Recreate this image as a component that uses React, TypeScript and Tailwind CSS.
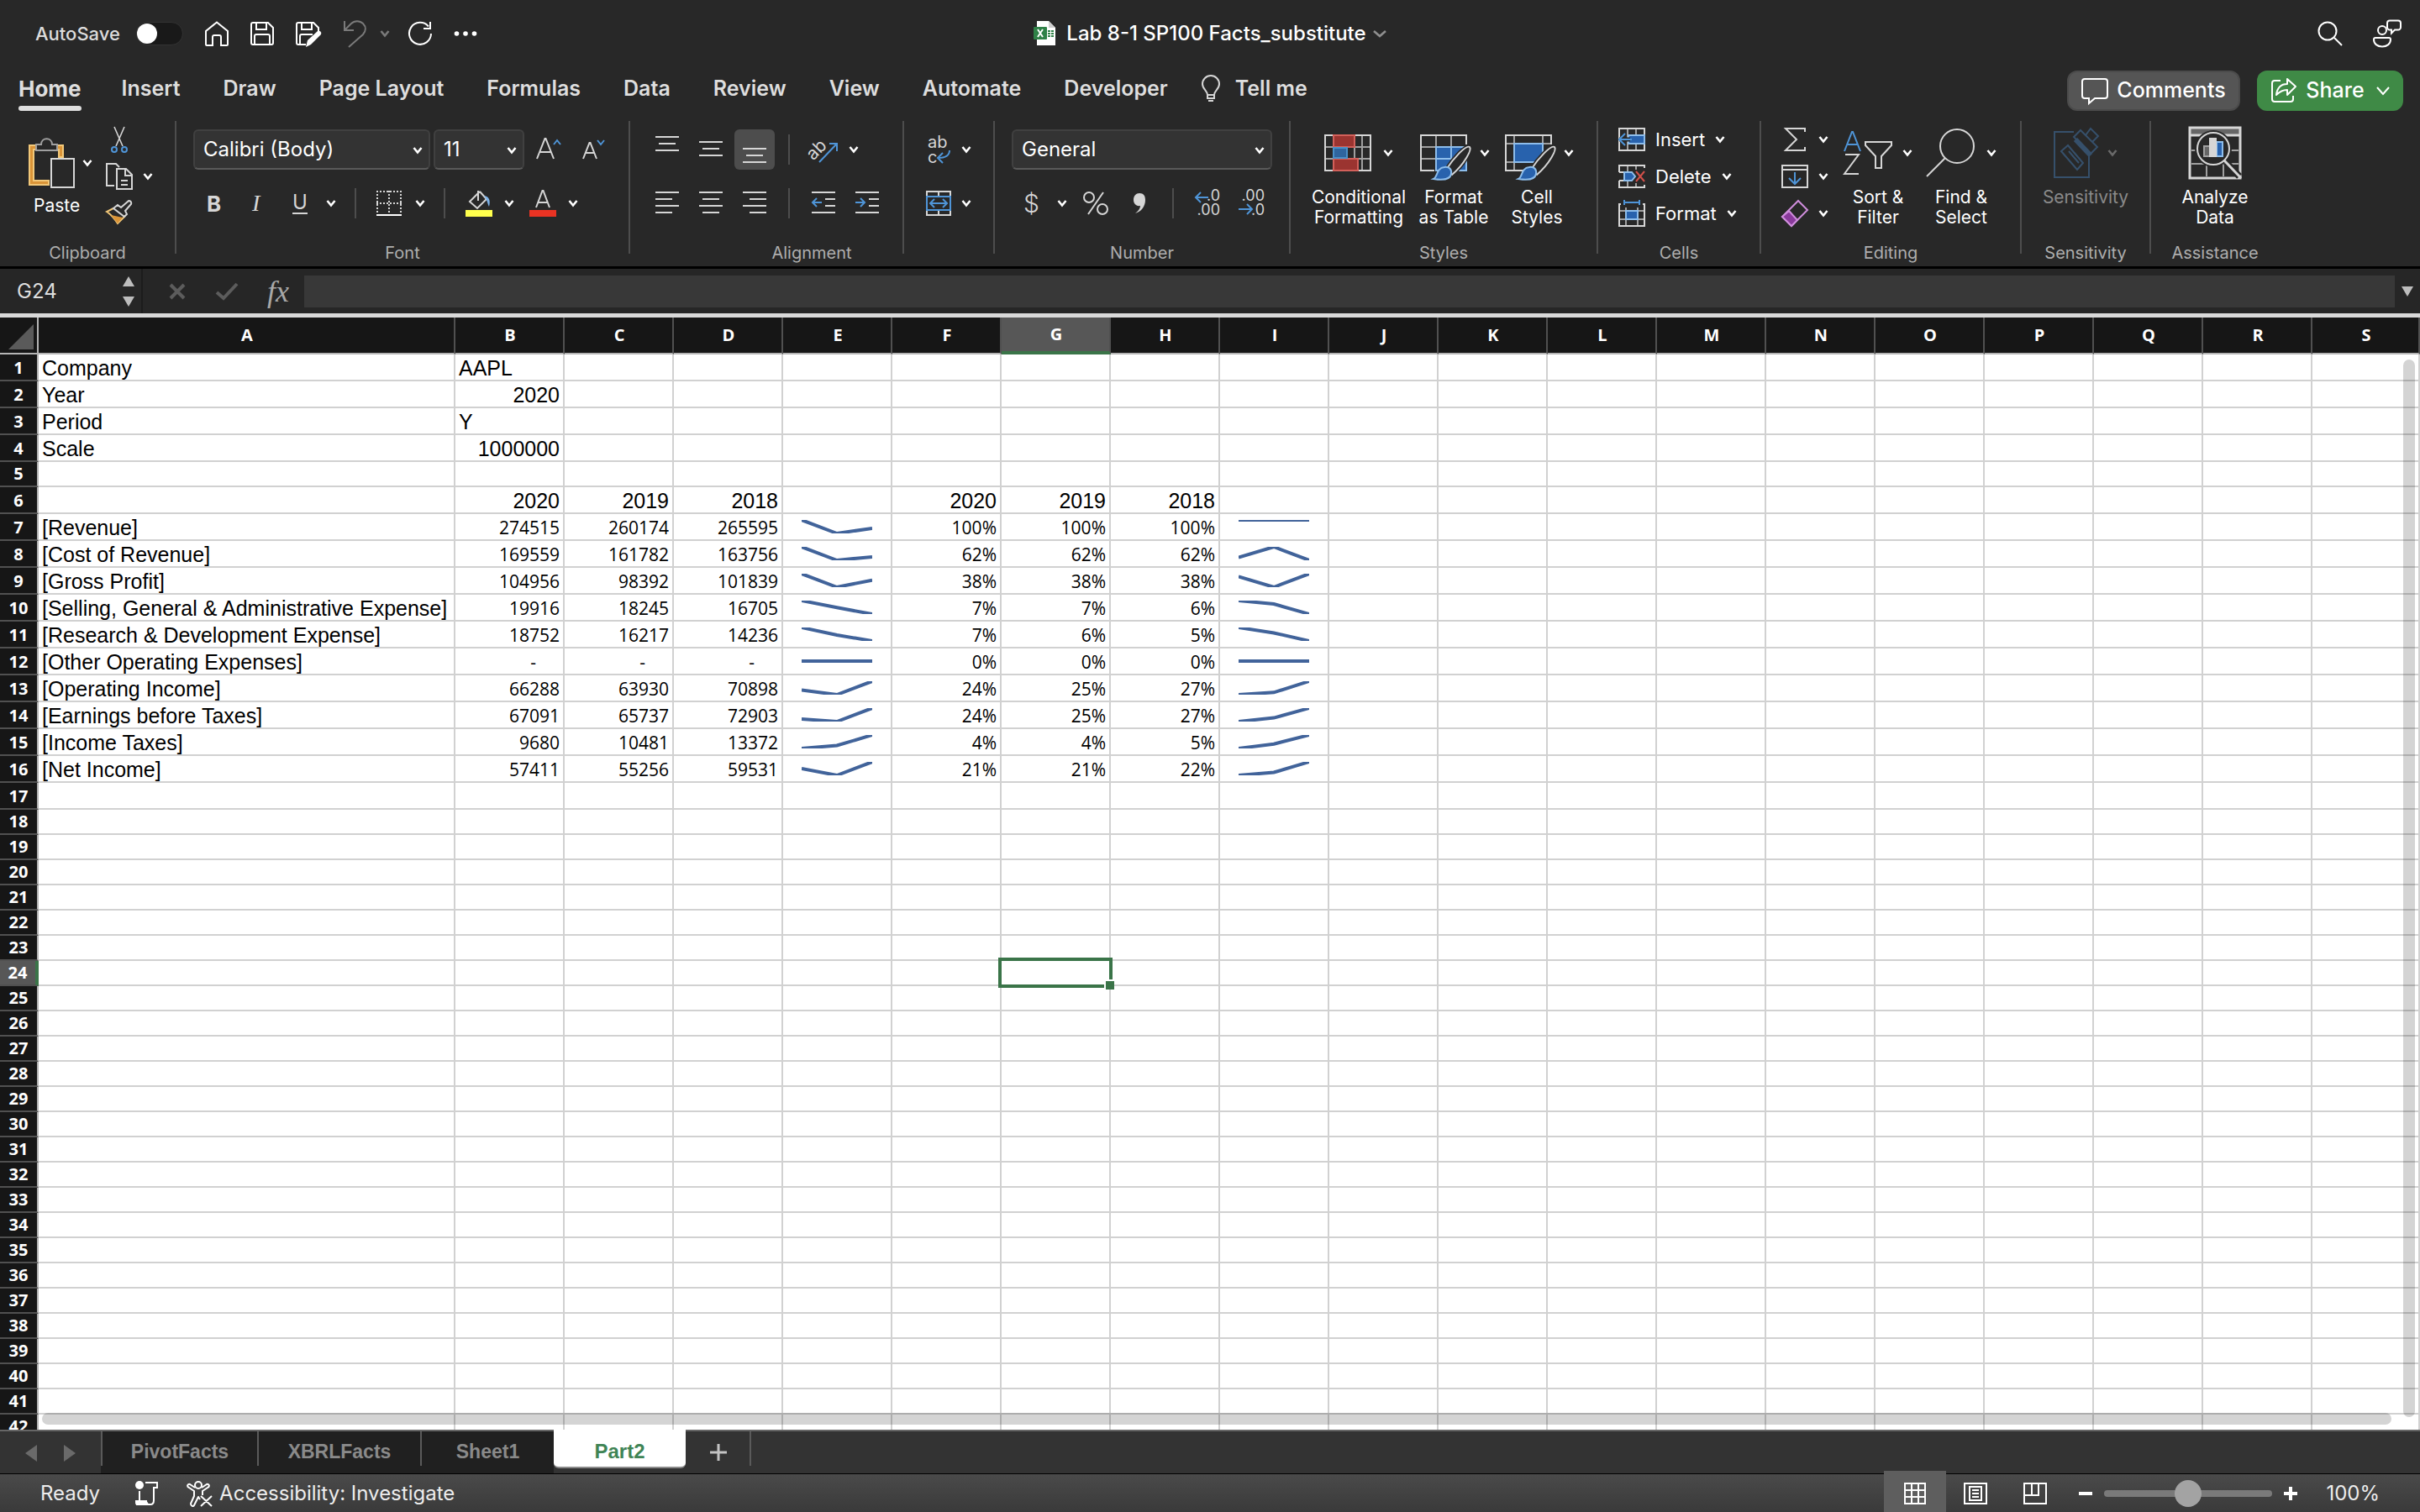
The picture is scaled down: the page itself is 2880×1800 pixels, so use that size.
import { ReactNode } from "react";

type Row = { label: string; values: [number, number, number] };

const COLUMNS = "ABCDEFGHIJKLMNOPQRS".split("");
const REVENUE = [274515, 260174, 265595];

const HEADINGS = ["2020", "2019", "2018"];

const STATEMENT: Row[] = [
  { label: "[Revenue]", values: [274515, 260174, 265595] },
  { label: "[Cost of Revenue]", values: [169559, 161782, 163756] },
  { label: "[Gross Profit]", values: [104956, 98392, 101839] },
  { label: "[Selling, General & Administrative Expense]", values: [19916, 18245, 16705] },
  { label: "[Research & Development Expense]", values: [18752, 16217, 14236] },
  { label: "[Other Operating Expenses]", values: [0, 0, 0] },
  { label: "[Operating Income]", values: [66288, 63930, 70898] },
  { label: "[Earnings before Taxes]", values: [67091, 65737, 72903] },
  { label: "[Income Taxes]", values: [9680, 10481, 13372] },
  { label: "[Net Income]", values: [57411, 55256, 59531] },
];

const TABS = [
  "Insert",
  "Draw",
  "Page Layout",
  "Formulas",
  "Data",
  "Review",
  "View",
  "Automate",
  "Developer",
];

/* ---------- small pieces ---------- */

function Chevron({ className = "text-white" }: { className?: string }) {
  return (
    <svg className={`h-3 w-3 shrink-0 ${className}`} viewBox="0 0 12 12" fill="none" stroke="currentColor" strokeWidth="2.6">
      <path d="M1.5 3 6 8.5 10.5 3" />
    </svg>
  );
}

function Icon({ w, h, children, className = "" }: { w: number; h: number; children: ReactNode; className?: string }) {
  return (
    <svg
      width={w}
      height={h}
      viewBox={`0 0 ${w} ${h}`}
      fill="none"
      stroke="#d6d6d6"
      strokeWidth="2"
      className={`block shrink-0 overflow-visible ${className}`}
    >
      {children}
    </svg>
  );
}

function Tool({ label, children, className = "" }: { label: string; children: ReactNode; className?: string }) {
  return (
    <button type="button" aria-label={label} className={`flex shrink-0 items-center ${className}`}>
      {children}
    </button>
  );
}

function GroupLabel({ children }: { children: ReactNode }) {
  return <div className="-mb-[6px] h-[14px] text-center text-[20px] leading-[14px] text-[#aeaeae]">{children}</div>;
}

function Group({ label, className, children }: { label: string; className: string; children: ReactNode }) {
  return (
    <section className={`flex h-[158px] shrink-0 flex-col justify-between border-r-2 border-[#4d4d4d] ${className}`}>
      <div>{children}</div>
      <GroupLabel>{label}</GroupLabel>
    </section>
  );
}

function Rule({ className = "" }: { className?: string }) {
  return <span className={`h-9 w-[2px] shrink-0 bg-[#4d4d4d] ${className}`} />;
}

function BigTool({ icon, lines, className = "", muted = false }: { icon: ReactNode; lines: string[]; className?: string; muted?: boolean }) {
  return (
    <button type="button" className={`flex shrink-0 flex-col items-center text-[21px] leading-6 ${muted ? "text-[#8a8a8a]" : "text-white"} ${className}`}>
      <span className="mb-[3px] flex h-[76px] items-center">{icon}</span>
      {lines.map((l) => (
        <span key={l}>{l}</span>
      ))}
    </button>
  );
}

function Lines({ rows }: { rows: [number, number, number][] }) {
  return (
    <Icon w={28} h={28}>
      {rows.map(([y, a, b]) => (
        <path key={y} d={`M${a} ${y}H${b}`} />
      ))}
    </Icon>
  );
}

function Combo({ label, value, className }: { label: string; value: string; className: string }) {
  return (
    <div className={`relative h-12 shrink-0 ${className}`}>
      <select
        aria-label={label}
        className="h-full w-full appearance-none rounded-md border-2 border-[#404040] border-b-[#5a5a5a] bg-[#333333] pl-[10px] text-[24px] text-white"
      >
        <option>{value}</option>
      </select>
      <span className="pointer-events-none absolute top-[19px] right-[9px]">
        <Chevron />
      </span>
    </div>
  );
}

/* ---------- title bar ---------- */

function TitleBar() {
  return (
    <header className="grid h-20 grid-cols-[1fr_auto_1fr] items-center text-white">
      <div className="flex items-center pl-[42px]">
        <label htmlFor="autosave" className="w-[120px] text-[22px] font-medium text-[#dcdcdc]">
          AutoSave
        </label>
        <span className="relative h-7 w-14">
          <input id="autosave" type="checkbox" className="h-7 w-14 appearance-none rounded-full border border-[#333333] bg-[#191919]" />
          <span className="pointer-events-none absolute top-[2px] left-[1px] h-6 w-6 rounded-full bg-white" />
        </span>
        <div className="ml-6 flex items-center">
          <Tool label="Home">
            <Icon w={32} h={32}>
              <path stroke="#fff" d="M3 29V13L16 2.5 29 13v16a1 1 0 0 1-1 1h-7V20a2 2 0 0 0-2-2h-6a2 2 0 0 0-2 2v10H4a1 1 0 0 1-1-1Z" />
            </Icon>
          </Tool>
          <Tool label="Save" className="ml-[22px]">
            <Icon w={32} h={32}>
              <path stroke="#fff" d="M5 3h18l6 6v18a2 2 0 0 1-2 2H5a2 2 0 0 1-2-2V5a2 2 0 0 1 2-2ZM9 3v8h12V3M7 29V19a2 2 0 0 1 2-2h14a2 2 0 0 1 2 2v10" />
            </Icon>
          </Tool>
          <Tool label="Save As" className="ml-[22px]">
            <Icon w={34} h={32}>
              <path stroke="#fff" d="M14 29H5a2 2 0 0 1-2-2V5a2 2 0 0 1 2-2h18l6 6v5M9 3v8h12V3M7 29V19a2 2 0 0 1 2-2h13" />
              <path stroke="none" fill="#fff" d="m14 32 2-8 12-11a3 3 0 0 1 4 4L20 29Z" />
            </Icon>
          </Tool>
          <Tool label="Undo" className="ml-6">
            <Icon w={28} h={34}>
              <path stroke="#7a7a7a" d="M2 2v11h11M2 13 10 5a10 10 0 0 1 14 0c4 4 3.5 9 0 13L7 33" />
            </Icon>
          </Tool>
          <Tool label="Undo history" className="ml-4">
            <Chevron className="text-[#7a7a7a]" />
          </Tool>
          <Tool label="Redo" className="ml-5">
            <Icon w={32} h={32}>
              <path stroke="#fff" d="M26 7.5A13 13 0 1 0 29 16M28 2v8h-8" />
            </Icon>
          </Tool>
          <Tool label="More" className="ml-6">
            <Icon w={28} h={8}>
              <g fill="#fff" stroke="none">
                <circle cx="3.5" cy="4" r="2.8" />
                <circle cx="14" cy="4" r="2.8" />
                <circle cx="24.5" cy="4" r="2.8" />
              </g>
            </Icon>
          </Tool>
        </div>
      </div>

      <button type="button" className="flex items-center text-[24px] font-medium">
        <Icon w={28} h={32} className="mr-[11px]">
          <g stroke="none">
            <path fill="#fff" d="M4 1h14l8 8v21H4Z" />
            <path fill="#cfcfcf" d="M18 1v8h8Z" />
            <rect y="8" width="16" height="15" rx="1" fill="#2f8147" />
            <path fill="#2f8147" d="M17 12h3v2h-3zM21 12h3v2h-3zM17 15h3v2h-3zM21 15h3v2h-3zM17 18h3v2h-3zM21 18h3v2h-3z" />
          </g>
          <path stroke="#fff" d="m5 11 6 9M11 11l-6 9" />
        </Icon>
        Lab 8-1 SP100 Facts_substitute
        <svg className="ml-2 h-3 w-4" viewBox="0 0 16 12" fill="none" stroke="#8f8f8f" strokeWidth="2.6">
          <path d="m1 3 7 6 7-6" />
        </svg>
      </button>

      <div className="flex items-center justify-end gap-9 pr-[22px]">
        <Tool label="Search">
          <Icon w={30} h={30}>
            <circle stroke="#fff" cx="12" cy="12" r="10.5" />
            <path stroke="#fff" d="m20 20 9 9" />
          </Icon>
        </Tool>
        <Tool label="Presence">
          <Icon w={34} h={34}>
            <g stroke="#fff">
              <circle cx="11" cy="13" r="5" />
              <path d="M3 22h16a2 2 0 0 1 2 2c0 5-4 8.5-10 8.5S1 29 1 24a2 2 0 0 1 2-2Z" />
              <path d="M20 1.5h10a3 3 0 0 1 3 3v5a3 3 0 0 1-3 3h-4l-4 4v-4h-2a3 3 0 0 1-3-3v-5a3 3 0 0 1 3-3Z" />
            </g>
          </Icon>
        </Tool>
      </div>
    </header>
  );
}

function TabBar() {
  return (
    <nav className="flex h-16 items-start justify-between text-[25px] font-semibold text-[#dedede]">
      <div className="flex h-[52px] items-start pl-[22px] leading-[50px]">
        <button type="button" className="relative h-[52px] text-[26px] font-bold">
          Home
          <span className="absolute inset-x-0 bottom-0 h-[6px] rounded-full bg-[#dedede]" />
        </button>
        <div className="ml-12 flex gap-[51px]">
          {TABS.map((t) => (
            <button type="button" key={t}>
              {t}
            </button>
          ))}
        </div>
        <button type="button" className="ml-10 flex h-[50px] items-center gap-[18px]">
          <Icon w={22} h={32}>
            <path d="M7 24c0-5-6-7-6-13a10 10 0 0 1 20 0c0 6-6 8-6 13ZM7 24v4h8v-4M8 31h6" />
          </Icon>
          Tell me
        </button>
      </div>
      <div className="mt-1 flex gap-5 pr-5 font-medium text-white">
        <button type="button" className="flex h-12 w-[206px] items-center justify-center gap-[10px] rounded-xl border-2 border-[#4b4b4b] bg-[#555555]">
          <Icon w={32} h={32}>
            <path stroke="#fff" d="M4 2h24a3 3 0 0 1 3 3v17a3 3 0 0 1-3 3H16l-7 6v-6H4a3 3 0 0 1-3-3V5a3 3 0 0 1 3-3Z" />
          </Icon>
          Comments
        </button>
        <button type="button" className="flex h-12 w-[174px] items-center justify-center gap-[10px] rounded-xl bg-[#3f8a46]">
          <Icon w={32} h={32}>
            <g stroke="#fff">
              <path d="M12 4H5a3 3 0 0 0-3 3v19a3 3 0 0 0 3 3h19a3 3 0 0 0 3-3v-4" />
              <path strokeLinejoin="round" d="M20 2v6C12 8 8 13 7 21c4-4 8-6 13-6v6l10-10Z" />
            </g>
          </Icon>
          Share
          <svg className="ml-1 h-3 w-4" viewBox="0 0 16 12" fill="none" stroke="#fff" strokeWidth="2">
            <path d="m1 2 7 8 7-8" />
          </svg>
        </button>
      </div>
    </nav>
  );
}

/* ---------- ribbon ---------- */

function BrushOverlay() {
  return (
    <g>
      <path stroke="#282828" strokeWidth="5" d="M59 15c3 3-6 20-21 33l-7-6C40 28 55 12 59 15Z" />
      <path fill="#282828" d="M59 15c3 3-6 20-21 33l-7-6C40 28 55 12 59 15Z" />
      <path stroke="#8dbdeb" fill="#2862ad" d="M29 39c6-1 9 3 8 8-1 6-9 8-21 6 5-2 3-13 13-14Z" />
    </g>
  );
}

function Ribbon() {
  return (
    <div className="flex h-[173px] overflow-hidden text-[24px] text-[#d6d6d6]">
      <Group label="Clipboard" className="w-[210px]">
        <div className="flex pl-[34px]">
          <button type="button" className="w-[78px] pt-[10px] text-left text-[21px] text-white">
            <span className="flex items-center gap-[9px]">
              <Icon w={55} h={60}>
                <path fill="#da9438" stroke="#f2c879" d="M1 9h40v14h-5V14H6v37h18v5H1Z" />
                <path stroke="#a0a0a0" fill="#282828" d="M9 15V8h6c0-9 13-9 13 0h6v7Z" />
                <path fill="#282828" d="M27 25h27v34H27Z" />
              </Icon>
              <Chevron />
            </span>
            <span className="ml-[6px] block pt-[7px] leading-7">Paste</span>
          </button>
          <div className="ml-[14px] flex flex-col">
            <Tool label="Cut" className="mt-[6px] pl-[6px]">
              <Icon w={20} h={32}>
                <path d="M4 1 14 24M16 1 6 24" strokeWidth="1.6" />
                <circle cx="4" cy="28" r="3" stroke="#4f95d8" />
                <circle cx="16" cy="28" r="3" stroke="#4f95d8" />
              </Icon>
            </Tool>
            <Tool label="Copy" className="mt-3 gap-3">
              <Icon w={32} h={32}>
                <path d="M10 27H1V1h11l4 4" />
                <path d="M13 7h11l7 7v17H13ZM23 7v8h8M18 21h8M18 26h8" />
              </Icon>
              <Chevron />
            </Tool>
            <Tool label="Format Painter" className="mt-3">
              <Icon w={32} h={30}>
                <path stroke="#f2c879" d="M9 10 1 14c5 3 9 8 13 14l9-9" />
                <path stroke="none" fill="#da9438" d="m6 18 14 3-6 7Z" />
                <path d="m9 10 5-4 4 3 8-7c2-2 5 0 4 3l-7 8 2 4-3 3Z" />
              </Icon>
            </Tool>
          </div>
        </div>
      </Group>

      <Group label="Font" className="w-[540px]">
        <div className="flex items-center pt-[10px] pl-5">
          <Combo label="Font" value="Calibri (Body)" className="w-[282px]" />
          <Combo label="Font size" value="11" className="ml-1 w-[108px]" />
          <Tool label="Increase font size" className="ml-[14px]">
            <Icon w={30} h={30}>
              <path d="M1 26 10.5 2h1L21 26M5 18h12" />
              <path stroke="#4f95d8" d="m21 9 4-5 4 5" />
            </Icon>
          </Tool>
          <Tool label="Decrease font size" className="ml-6">
            <Icon w={30} h={30}>
              <path d="M2 26 9.5 7h1L18 26M5 19h10" />
              <path stroke="#4f95d8" d="m19 4 4 5 4-5" />
            </Icon>
          </Tool>
        </div>
        <div className="mt-[22px] flex h-9 items-center pl-9">
          <Tool label="Bold" className="w-[54px] text-[26px] font-bold">B</Tool>
          <Tool label="Italic" className="w-12 text-[28px] italic">
            <span className="font-['Liberation_Serif',serif]">I</span>
          </Tool>
          <Tool label="Underline" className="w-10 text-[24px]">
            <span className="border-b-2 border-[#d6d6d6] leading-6">U</span>
          </Tool>
          <Chevron />
          <Rule className="ml-[22px]" />
          <Tool label="Borders" className="ml-6 gap-4">
            <Icon w={30} h={30}>
              <path strokeDasharray="2 2" d="M0 1h30M0 15h30M1 0v28M15 0v28M29 0v28" />
              <path stroke="#fff" d="M0 29h30" />
            </Icon>
            <Chevron />
          </Tool>
          <Rule className="ml-[22px]" />
          <Tool label="Fill colour" className="ml-6 gap-[14px]">
            <Icon w={32} h={32}>
              <path d="M15 1v12M17 2 5 14l9 8L25 11 17 2" />
              <path stroke="none" fill="#7db3ea" d="M22 7c6 1 8 5 6 13-2-4-2-8-6-13Z" />
              <path stroke="none" fill="#ffff4d" d="M0 24h32v8H0z" />
            </Icon>
            <Chevron />
          </Tool>
          <Tool label="Font colour" className="ml-[18px] gap-[14px]">
            <Icon w={32} h={32}>
              <path d="M8 21 15.5 1h1L24 21M11 15h10" />
              <path stroke="none" fill="#e93323" d="M0 24h32v8H0z" />
            </Icon>
            <Chevron />
          </Tool>
        </div>
      </Group>

      <section className="flex h-[158px] w-[434px] shrink-0 flex-col justify-between border-r-2 border-[#4d4d4d]">
        <div className="flex">
          <div className="h-[130px] w-[324px] pl-[30px]">
            <div className="flex items-center pt-[10px]">
              <Tool label="Top align">
                <Lines rows={[[-1, 0, 28], [7, 4, 24], [15, 0, 28]]} />
              </Tool>
              <Tool label="Middle align" className="ml-6">
                <Lines rows={[[5, 0, 28], [13, 4, 24], [21, 0, 28]]} />
              </Tool>
              <Tool label="Bottom align" className="ml-[14px] h-12 w-12 justify-center rounded-md bg-[#4d4d4d]">
                <Lines rows={[[13, 0, 28], [21, 4, 24], [29, 0, 28]]} />
              </Tool>
              <Rule className="ml-4" />
              <Tool label="Orientation" className="ml-[22px] gap-3">
                <Icon w={36} h={34}>
                  <text x="-2" y="24" fontSize="21" fill="#d6d6d6" stroke="none" transform="rotate(-45 10 18)">
                    ab
                  </text>
                  <path stroke="#4f95d8" d="M13 32 34 10M25 10h9v9" />
                </Icon>
                <Chevron />
              </Tool>
            </div>
            <div className="mt-[22px] flex h-9 items-center">
              <Tool label="Align left">
                <Lines rows={[[1, 0, 28], [9, 0, 20], [17, 0, 28], [25, 0, 20]]} />
              </Tool>
              <Tool label="Center" className="ml-6">
                <Lines rows={[[1, 0, 28], [9, 4, 24], [17, 0, 28], [25, 4, 24]]} />
              </Tool>
              <Tool label="Align right" className="ml-6">
                <Lines rows={[[1, 0, 28], [9, 8, 28], [17, 0, 28], [25, 8, 28]]} />
              </Tool>
              <Rule className="ml-[26px]" />
              <Tool label="Decrease indent" className="ml-[26px]">
                <Icon w={28} h={28}>
                  <path d="M0 1h28M16 9h12M16 17h12M0 25h28" />
                  <path stroke="#4f95d8" d="M12 13H1M6 8l-5 5 5 5" />
                </Icon>
              </Tool>
              <Tool label="Increase indent" className="ml-6">
                <Icon w={28} h={28}>
                  <path d="M0 1h28M16 9h12M16 17h12M0 25h28" />
                  <path stroke="#4f95d8" d="M0 13h11M6 8l5 5-5 5" />
                </Icon>
              </Tool>
            </div>
          </div>
          <div className="h-[158px] border-l-2 border-[#4d4d4d] pl-[26px]">
            <Tool label="Wrap text" className="mt-[10px] h-12 gap-3">
              <Icon w={30} h={34}>
                <g fill="#d6d6d6" stroke="none" fontSize="20">
                  <text x="2" y="15">ab</text>
                  <text x="2" y="33">c</text>
                </g>
                <path stroke="#4f95d8" d="M28 18c0 6-4 9-14 9M20 21l-6 6 6 6" />
              </Icon>
              <Chevron />
            </Tool>
            <Tool label="Merge" className="mt-[22px] h-9 gap-3">
              <Icon w={30} h={30}>
                <path d="M1 1h28v28H1ZM15 1v6M15 23v6" />
                <path stroke="#4f95d8" fill="#282828" d="M1 7h28v16H1Z" />
                <path stroke="#4f95d8" d="M5 15h20M10 10l-5 5 5 5M20 10l5 5-5 5" />
              </Icon>
              <Chevron />
            </Tool>
          </div>
        </div>
        <div className="-mt-[14px]">
          <GroupLabel>Alignment</GroupLabel>
        </div>
      </section>

      <Group label="Number" className="w-[352px]">
        <div className="pt-[10px] pl-5">
          <Combo label="Number format" value="General" className="w-[310px]" />
        </div>
        <div className="mt-[22px] flex h-9 items-center pl-[34px] text-[30px]">
          <Tool label="Currency" className="w-10 font-light">$</Tool>
          <Chevron />
          <Tool label="Percent" className="ml-[18px]">
            <Icon w={32} h={30}>
              <circle cx="8" cy="8" r="6" />
              <circle cx="24" cy="22" r="6" />
              <path d="M25 2 7 28" />
            </Icon>
          </Tool>
          <Tool label="Comma" className="ml-7">
            <Icon w={16} h={26}>
              <path stroke="none" fill="#d6d6d6" d="M8 1c5 0 7 3 7 8 0 8-5 14-12 16 4-3 6-6 6-9-5 1-8-3-8-7 0-5 3-8 7-8Z" />
            </Icon>
          </Tool>
          <Rule className="ml-[31px]" />
          <Tool label="Increase decimal" className="ml-6">
            <Icon w={32} h={34}>
              <g fill="#d6d6d6" stroke="none" fontSize="18">
                <text x="31" y="14" textAnchor="end">.0</text>
                <text x="31" y="31" textAnchor="end">.00</text>
              </g>
              <path stroke="#4f95d8" d="M17 10H2M8 4l-6 6 6 6" />
            </Icon>
          </Tool>
          <Tool label="Decrease decimal" className="ml-5">
            <Icon w={32} h={34}>
              <g fill="#d6d6d6" stroke="none" fontSize="18">
                <text x="32" y="14" textAnchor="end">.00</text>
                <text x="32" y="31" textAnchor="end">.0</text>
              </g>
              <path stroke="#4f95d8" d="M1 24h16M11 18l6 6-6 6" />
            </Icon>
          </Tool>
        </div>
      </Group>

      <Group label="Styles" className="w-[366px]">
        <div className="flex pl-6">
          <BigTool
            className="w-[114px]"
            lines={["Conditional", "Formatting"]}
            icon={
              <span className="flex items-center gap-[14px]">
                <Icon w={56} h={44}>
                  <path d="M1 1h54v42H1Z" />
                  <path stroke="#a0a0a0" d="M2 15h52M2 29h52M11 2v40M45 2v40M36 2v40" />
                  <path stroke="#d2605a" fill="#9b3430" d="M11 1h25v14H11ZM11 29h29v14H11Z" />
                  <path stroke="#4a90c8" fill="#2f659e" d="M11 16h16v12H11Z" />
                </Icon>
                <Chevron />
              </span>
            }
          />
          <BigTool
            className="ml-[7px] w-[98px]"
            lines={["Format", "as Table"]}
            icon={
              <span className="flex items-center gap-[10px] pl-[2px]">
                <Icon w={61} h={60}>
                  <g transform="translate(0 8)">
                    <path d="M55 12V1H1v42h16" />
                    <path stroke="#a0a0a0" d="M2 15h52M2 29h17M19 2v27M37 2v13" />
                    <path stroke="#8dbdeb" fill="#2862ad" d="M19 15h36v28H19Z" />
                    <path stroke="#8dbdeb" d="M19 29h20M37 15v14" />
                    <BrushOverlay />
                  </g>
                </Icon>
                <Chevron />
              </span>
            }
          />
          <BigTool
            className="ml-[5px] w-[90px]"
            lines={["Cell", "Styles"]}
            icon={
              <span className="flex items-center gap-[9px] pl-[6px]">
                <Icon w={61} h={60}>
                  <g transform="translate(0 8)">
                    <path d="M55 12V1H1v42h24" />
                    <path stroke="#a0a0a0" d="M2 11h52M2 33h9M11 2v40M45 2v9" />
                    <path stroke="#8dbdeb" fill="#2862ad" d="M11 11h34v22H11Z" />
                    <BrushOverlay />
                  </g>
                </Icon>
                <Chevron />
              </span>
            }
          />
        </div>
      </Group>

      <Group label="Cells" className="w-[194px]">
        <div className="flex flex-col gap-4 pt-2 pl-6 text-[22px] leading-7 text-white">
          <button type="button" className="flex h-7 items-center gap-3">
            <Icon w={32} h={28}>
              <path d="M1 1h30v26H1Z" />
              <path stroke="#a0a0a0" d="M11 2v24M21 2v24" />
              <path stroke="#8dbdeb" fill="#2862ad" d="M12 9h19v10H12Z" />
              <path stroke="#282828" strokeWidth="5" d="M14 14H1" />
              <path stroke="#4f95d8" d="M16 14H1M8 7l-7 7 7 7" />
            </Icon>
            Insert
            <Chevron />
          </button>
          <button type="button" className="flex h-7 items-center gap-3">
            <Icon w={32} h={28}>
              <path d="M1 9V1h30v3M1 19v8h30v-3M1 9h6M1 19h6" />
              <path stroke="#a0a0a0" d="M11 2v7M21 2v4M11 19v7M21 22v4" />
              <path stroke="#8dbdeb" fill="#2862ad" d="M7 9h9l4 5-4 5H7Z" />
              <path stroke="#d2504a" d="m21 8 10 12M31 8 21 20" />
            </Icon>
            Delete
            <Chevron />
          </button>
          <button type="button" className="flex h-7 items-center gap-3">
            <Icon w={32} h={32}>
              <path d="M3 5H1v26h30V5h-2" />
              <path stroke="#a0a0a0" d="M2 13h28M2 23h28M9 9v21M23 9v21" />
              <path stroke="#8dbdeb" fill="#2862ad" d="M9 13h14v10H9Z" />
              <path stroke="#4f95d8" d="M7 0v6M25 0v6M7 3h18" />
            </Icon>
            Format
            <Chevron />
          </button>
        </div>
      </Group>

      <Group label="Editing" className="w-[310px]">
        <div className="flex pl-6">
          <div className="flex flex-col gap-4 pt-2">
            <Tool label="AutoSum" className="h-7 gap-3">
              <Icon w={32} h={28}>
                <path d="M28 5V1H5l13 13L5 27h23v-4" />
              </Icon>
              <Chevron />
            </Tool>
            <Tool label="Fill" className="h-7 gap-3">
              <Icon w={32} h={28}>
                <path d="M1 1h30v26H1ZM1 6h30" />
                <path stroke="#4f95d8" d="M16 9v14M9 16l7 7 7-7" />
              </Icon>
              <Chevron />
            </Tool>
            <Tool label="Clear" className="h-7 gap-3">
              <Icon w={32} h={32}>
                <path stroke="#cf8ddc" d="M20 1 31 12 12 31 1 20Z" />
                <path stroke="#cf8ddc" fill="#8a3a9c" d="m9 13 10 11-7 7L1 20Z" />
              </Icon>
              <Chevron />
            </Tool>
          </div>
          <BigTool
            className="ml-[15px] w-[88px]"
            lines={["Sort &", "Filter"]}
            icon={
              <span className="flex items-center gap-3">
                <Icon w={58} h={54}>
                  <path stroke="#4f95d8" d="M1 25 10 2h1l9 23M5 17h11" />
                  <path d="M2 29h16L1 52h17" />
                  <path d="M26 14h31v4L45 31v14h-7V31L26 18Z" />
                </Icon>
                <Chevron />
              </span>
            }
          />
          <BigTool
            className="ml-[11px] w-[88px]"
            lines={["Find &", "Select"]}
            icon={
              <span className="flex items-center gap-[14px]">
                <Icon w={58} h={58}>
                  <circle cx="37" cy="21" r="20" />
                  <path d="M23 35 1 57" />
                </Icon>
                <Chevron />
              </span>
            }
          />
        </div>
      </Group>

      <Group label="Sensitivity" className="w-[154px]">
        <div className="flex justify-center">
          <BigTool
            muted
            lines={["Sensitivity"]}
            icon={
              <span className="flex items-center gap-[10px]">
                <Icon w={54} h={60}>
                  <g stroke="#36506b">
                    <path d="M24 5H1v54h41V34" />
                    <path d="m17 21 18 21-7 8L9 28ZM18 28l12 14" />
                    <path d="m32 3 20 20-8 8-20-20Z" />
                    <path strokeWidth="6" d="m26 14 18 19" />
                    <path d="m38 9 6-8 9 9-7 7" />
                  </g>
                </Icon>
                <Chevron className="text-[#6a6a6a]" />
              </span>
            }
          />
        </div>
      </Group>

      <section className="flex h-[158px] w-[152px] shrink-0 flex-col justify-between">
        <div className="flex justify-center">
          <BigTool
            lines={["Analyze", "Data"]}
            icon={
              <Icon w={64} h={64}>
                <path fill="#666666" stroke="none" d="M1 1h62v10H1Z" />
                <path strokeWidth="3" d="M2 2h60v60H2ZM2 11h60" />
                <path stroke="#a0a0a0" d="M4 29h56M4 45h56M22 45v15M42 45v15" />
                <circle cx="30" cy="27" r="22" fill="#282828" stroke="none" />
                <circle cx="30" cy="27" r="19" />
                <path stroke="#a0a0a0" fill="#666666" d="M19 24h7v12h-7Z" />
                <path stroke="#8dbdeb" fill="#2862ad" d="M34 19h7v17h-7Z" />
                <path stroke="none" fill="#d6d6d6" d="M25 14h9v23h-9Z" />
                <path stroke="#282828" strokeWidth="8" d="m45 43 16 17" />
                <path strokeWidth="3" d="m43 41 20 21" />
              </Icon>
            }
          />
        </div>
        <GroupLabel>Assistance</GroupLabel>
      </section>
    </div>
  );
}

function FormulaBar() {
  return (
    <div className="flex h-[53px] items-center bg-[#262626]">
      <div className="flex h-full w-[170px] items-center justify-between border-r-2 border-[#1c1c1c] pr-2 pl-5">
        <input aria-label="Name box" defaultValue="G24" className="w-24 bg-transparent text-[24px] text-[#dedede]" />
        <Icon w={14} h={36}>
          <path stroke="none" fill="#bdbdbd" d="M7 0 14 12H0ZM7 36 0 24h14Z" />
        </Icon>
      </div>
      <Tool label="Cancel" className="ml-[31px]">
        <Icon w={20} h={20}>
          <path stroke="#5c5c5c" strokeWidth="4" d="m2 2 16 16M18 2 2 18" />
        </Icon>
      </Tool>
      <Tool label="Enter" className="ml-[35px]">
        <Icon w={28} h={22}>
          <path stroke="#5c5c5c" strokeWidth="4" d="m2 12 8 7L26 2" />
        </Icon>
      </Tool>
      <Tool label="Insert function" className="ml-[34px] w-11 text-[36px] leading-10 text-[#a8a8a8] italic">
        <span className="font-['Liberation_Serif',serif]">fx</span>
      </Tool>
      <input aria-label="Formula" className="h-[38px] min-w-0 flex-1 bg-[#383838] px-3 text-[24px] text-white" />
      <Tool label="Expand formula bar" className="w-[30px] justify-center">
        <Icon w={14} h={12}>
          <path stroke="none" fill="#bdbdbd" d="M0 0h14L7 12Z" />
        </Icon>
      </Tool>
    </div>
  );
}

/* ---------- sheet ---------- */

function Sparkline({ values, flat = 8 }: { values: number[]; flat?: number }) {
  const min = Math.min(...values);
  const max = Math.max(...values);
  const points = values.map((v, i) => `${i * 42},${max === min ? flat : 16 - ((v - min) / (max - min)) * 16}`).join(" ");
  return (
    <svg className="mx-auto block" width="84" height="16" viewBox="0 0 84 16" fill="none" stroke="#41639a" strokeWidth="4">
      <polyline points={points} />
    </svg>
  );
}

const LABEL = "text-[25px]";
const NUM = "text-right text-[21px] font-medium font-['Open_Sans',sans-serif]";

function cellsFor(row: number): Record<string, { body: ReactNode; cls: string }> {
  const right = `${LABEL} text-right`;
  if (row === 1) return { A: { body: "Company", cls: LABEL }, B: { body: "AAPL", cls: LABEL } };
  if (row === 2) return { A: { body: "Year", cls: LABEL }, B: { body: "2020", cls: right } };
  if (row === 3) return { A: { body: "Period", cls: LABEL }, B: { body: "Y", cls: LABEL } };
  if (row === 4) return { A: { body: "Scale", cls: LABEL }, B: { body: "1000000", cls: right } };
  const out: Record<string, { body: ReactNode; cls: string }> = {};
  if (row === 6) {
    HEADINGS.forEach((h, i) => {
      out["BCD"[i]] = { body: h, cls: right };
      out["FGH"[i]] = { body: h, cls: right };
    });
  }
  const line = STATEMENT[row - 7];
  if (line) {
    const ratios = line.values.map((v, i) => v / REVENUE[i]);
    out.A = { body: line.label, cls: LABEL };
    line.values.forEach((v, i) => {
      out["BCD"[i]] = v === 0 ? { body: <span className="pr-7">-</span>, cls: NUM } : { body: v, cls: NUM };
      out["FGH"[i]] = { body: `${Math.round(ratios[i] * 100)}%`, cls: NUM };
    });
    out.E = { body: <Sparkline values={line.values} />, cls: "align-middle" };
    out.I = { body: <Sparkline values={ratios} flat={row === 7 ? 0 : 8} />, cls: "align-middle" };
  }
  return out;
}

function rowHeight(row: number) {
  return row === 5 || row > 17 ? "h-[30px]" : "h-8";
}

function Sheet() {
  return (
    <div className="relative h-[1329px] overflow-hidden border-t-[5px] border-[#d9d9d9] bg-white">
      <table className="w-full table-fixed border-separate border-spacing-0 font-['Liberation_Sans',Arial,sans-serif] text-black">
        <colgroup>
          <col className="w-[46px]" />
          <col className="w-[496px]" />
          {COLUMNS.slice(1, -1).map((c) => (
            <col key={c} className="w-[130px]" />
          ))}
          <col />
        </colgroup>
        <thead>
          <tr className="h-11 bg-[#161616] font-['Open_Sans',sans-serif] text-[20px] leading-7 font-bold text-white">
            <th className="border-r-2 border-b-2 border-[#b5b5b5] p-0">
              <svg className="mt-1 ml-2 block" width="34" height="30" viewBox="0 0 34 30">
                <path fill="#5a5a5a" d="M32 0v30H2Z" />
              </svg>
            </th>
            {COLUMNS.map((c) => (
              <th
                key={c}
                scope="col"
                className={`border-r-2 border-r-[#505050] py-0 pr-0 pl-[2px] ${c === "G" ? "border-b-4 border-b-[#3a7448] bg-[#575757]" : "border-b-2 border-b-[#b5b5b5]"}`}
              >
                {c}
              </th>
            ))}
          </tr>
        </thead>
        <tbody>
          {Array.from({ length: 42 }, (_, i) => i + 1).map((row) => {
            const cells = cellsFor(row);
            return (
              <tr key={row} className={rowHeight(row)}>
                <th
                  scope="row"
                  className={`border-b-2 border-b-[#505050] p-0 align-bottom font-['Open_Sans',sans-serif] text-[20px] leading-7 font-bold text-white ${
                    row === 24 ? "border-r-4 border-r-[#3a7448] bg-[#575757]" : "border-r-2 border-r-[#b5b5b5] bg-[#161616]"
                  }`}
                >
                  {row}
                </th>
                {COLUMNS.map((c) => (
                  <td
                    key={c}
                    className={`relative border-r-2 border-b-2 border-[#d1d1d1] px-1 py-0 leading-7 whitespace-nowrap ${cells[c] ? cells[c].cls : ""} ${
                      cells[c]?.cls === "align-middle" ? "" : "align-bottom"
                    }`}
                  >
                    {cells[c]?.body}
                    {row === 24 && c === "G" && (
                      <span className="absolute -inset-1 z-10 border-4 border-[#3a7448]">
                        <span className="absolute -right-[6px] -bottom-[6px] h-3 w-3 border-t-2 border-l-2 border-white bg-[#3a7448]" />
                      </span>
                    )}
                  </td>
                ))}
              </tr>
            );
          })}
        </tbody>
      </table>
      <div className="absolute right-[34px] bottom-[6px] left-[50px] h-[14px] rounded-full bg-black/17" />
      <div className="absolute top-[50px] right-[6px] bottom-[15px] w-[14px] rounded-full bg-black/17" />
    </div>
  );
}

function SheetTabs() {
  return (
    <div className="flex h-[52px] border-t-2 border-[#666666] bg-[#333333] font-['Liberation_Sans',Arial,sans-serif] text-[23px] leading-[48px] font-bold text-[#8a8a8a]">
      <div className="flex w-[120px] items-start gap-8 pt-4 pl-[30px]">
        <Tool label="Previous sheets">
          <Icon w={14} h={20}>
            <path stroke="none" fill="#6a6a6a" d="M14 0v20L0 10Z" />
          </Icon>
        </Tool>
        <Tool label="Next sheets">
          <Icon w={14} h={20}>
            <path stroke="none" fill="#6a6a6a" d="M0 0v20L14 10Z" />
          </Icon>
        </Tool>
      </div>
      <div className="flex bg-[#202020]">
        <button type="button" className="h-[41px] w-[186px] border-l-2 border-[#5a5a5a] leading-[48px]">PivotFacts</button>
        <button type="button" className="h-[41px] w-[194px] border-l-2 border-[#5a5a5a] leading-[48px]">XBRLFacts</button>
        <button type="button" className="h-[41px] w-[159px] border-l-2 border-[#5a5a5a] leading-[48px]">Sheet1</button>
      </div>
      <button type="button" className="-mt-[2px] h-[46px] w-[157px] rounded-b-md border-b-2 border-[#8a8a8a] bg-white pt-[2px] text-[24px] leading-[48px] text-[#3f8455]">
        Part2
      </button>
      <button type="button" aria-label="New sheet" className="flex h-[41px] w-[78px] items-center justify-center border-r-2 border-[#5a5a5a] pt-2 pl-[2px]">
        <Icon w={20} h={20}>
          <path stroke="#c4c4c4" strokeWidth="3" d="M10 0v20M0 10h20" />
        </Icon>
      </button>
    </div>
  );
}

function StatusBar() {
  return (
    <footer className="flex h-[46px] items-center border-t border-black bg-linear-to-b from-[#4a4a4a] to-[#3a3a3a] text-[24px] text-[#ededed]">
      <span className="pl-12">Ready</span>
      <Tool label="Macro recording" className="ml-[41px]">
        <Icon w={30} h={30}>
          <path stroke="#fff" d="M13 2h14v6h-4v15c0 4-2 5-4 5H3v-4h12M6 12v12" />
          <circle cx="6" cy="5" r="5" fill="#fff" stroke="none" />
          <path stroke="none" fill="#fff" d="M1 23h13l4 6H3a3 3 0 0 1-2-3Z" />
        </Icon>
      </Tool>
      <button type="button" className="ml-8 flex items-center gap-[7px]">
        <Icon w={32} h={32}>
          <g stroke="#fff">
            <circle cx="14" cy="6" r="4" />
            <path strokeLinejoin="round" d="M10 9 4 5C1 4 0 8 3 9l6 4v6L5 28c0 3 3 4 4 2l5-10 2 3M18 9l6-4c3-1 4 3 1 4l-6 4v5M17 19l13 12M30 19 17 31" />
          </g>
        </Icon>
        Accessibility: Investigate
      </button>
      <div className="ml-auto flex h-full items-center pr-12">
        <Tool label="Normal view" className="-mt-1 h-[50px] w-[74px] justify-center bg-[#5e5e5e] pt-1">
          <Icon w={26} h={26}>
            <path stroke="#fff" d="M1 1h24v24H1ZM9 1v24M17 1v24M1 9h24M1 17h24" />
          </Icon>
        </Tool>
        <Tool label="Page layout view" className="ml-[21px]">
          <Icon w={28} h={26}>
            <path stroke="#fff" d="M1 1h26v24H1ZM7 5h14v16H7ZM10 9h8M10 13h8M10 17h8" />
          </Icon>
        </Tool>
        <Tool label="Page break view" className="ml-[43px]">
          <Icon w={28} h={26}>
            <path stroke="#fff" d="M1 1h26v24H1ZM1 15h17V1M10 1v14" />
          </Icon>
        </Tool>
        <Tool label="Zoom out" className="ml-[38px]">
          <Icon w={16} h={16}>
            <path stroke="#fff" strokeWidth="4" d="M0 8h16" />
          </Icon>
        </Tool>
        <input
          type="range"
          aria-label="Zoom"
          defaultValue={50}
          className="ml-[14px] h-8 w-[200px] appearance-none bg-transparent [&::-webkit-slider-runnable-track]:h-2 [&::-webkit-slider-runnable-track]:rounded-full [&::-webkit-slider-runnable-track]:bg-[#7a7a7a] [&::-webkit-slider-thumb]:-mt-3 [&::-webkit-slider-thumb]:h-8 [&::-webkit-slider-thumb]:w-8 [&::-webkit-slider-thumb]:appearance-none [&::-webkit-slider-thumb]:rounded-full [&::-webkit-slider-thumb]:bg-[#a3a3a3]"
        />
        <Tool label="Zoom in" className="ml-[14px]">
          <Icon w={16} h={16}>
            <path stroke="#fff" strokeWidth="4" d="M0 8h16M8 0v16" />
          </Icon>
        </Tool>
        <span className="ml-[34px]">100%</span>
      </div>
    </footer>
  );
}

export default function App() {
  return (
    <div className="min-h-screen bg-[#282828] font-[Inter,'Liberation_Sans',sans-serif]">
      <TitleBar />
      <TabBar />
      <Ribbon />
      <div className="border-t-[3px] border-black">
        <FormulaBar />
      </div>
      <Sheet />
      <SheetTabs />
      <StatusBar />
    </div>
  );
}
